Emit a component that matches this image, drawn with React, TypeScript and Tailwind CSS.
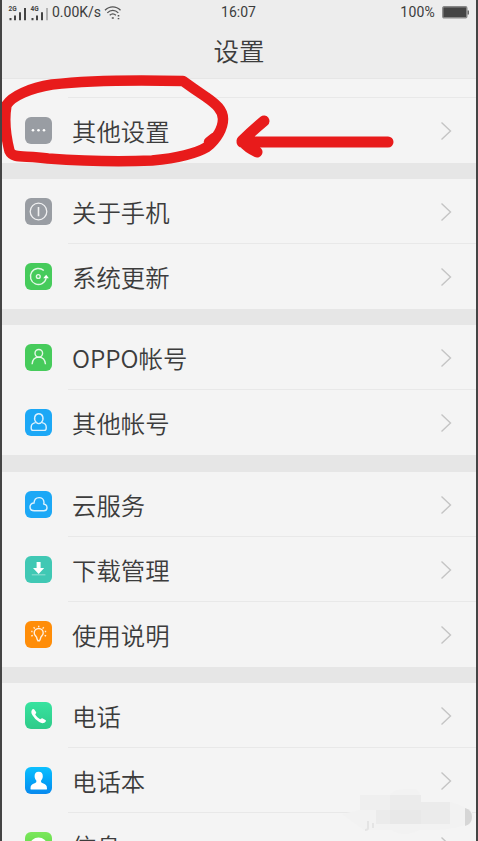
import React from "react";

type Item = { label: string; tile: string; icon: React.ReactNode };

const line = { fill: "none", stroke: "#fff", strokeOpacity: 0.85, strokeWidth: 1.1 };

const groups: { gap: string; items: Item[] }[] = [
  {
    gap: "mt-[19px]",
    items: [
      {
        label: "其他设置",
        tile: "bg-[#999da3]",
        icon: (
          <g fill="#fff">
            <circle cx="8" cy="13.300" r="1.3" />
            <circle cx="13.500" cy="13.300" r="1.3" />
            <circle cx="19" cy="13.300" r="1.3" />
          </g>
        ),
      },
    ],
  },
  {
    gap: "mt-4",
    items: [
      {
        label: "关于手机",
        tile: "bg-[#999da3]",
        icon: (
          <g {...line}>
            <circle cx="13.5" cy="13.5" r="8.3" strokeWidth="1.3" />
            <path d="M13.5 9v9.2" strokeWidth="1.6" />
          </g>
        ),
      },
      {
        label: "系统更新",
        tile: "bg-[#46cb5b]",
        icon: (
          <g {...line} strokeWidth="1.4">
            <path d="M18.800 7.600A8 8 0 1 0 21.200 15.200" />
            <path d="M18.200 15.200l3-3.400 2.600 3.400z" fill="#fff" stroke="none" />
            <circle cx="13.300" cy="13.500" r="1.900" />
          </g>
        ),
      },
    ],
  },
  {
    gap: "mt-4",
    items: [
      {
        label: "OPPO帐号",
        tile: "bg-[#46cb5b]",
        icon: (
          <g {...line} strokeWidth="1.4">
            <circle cx="13.800" cy="9.300" r="3.800" />
            <path d="M7.100 20.300c.2-4 2.500-7.200 6.700-7.200s6.400 3.200 6.700 7.200" />
          </g>
        ),
      },
      {
        label: "其他帐号",
        tile: "bg-[#1ca8f6]",
        icon: (
          <g {...line} strokeWidth="1.4">
            <path d="M11.300 13.600C8.300 10.400 9.400 4.800 13.800 4.800s5.500 5.600 2.500 8.800c-1.300 1.300-3.700 1.300-5 0z" />
            <path d="M10.500 13.600c-3 .6-4.300 1.800-4.300 4.400v1.200q0 2.200 2.200 2.200h10.600q2.200 0 2.200-2.200V18c0-2.600-1.200-3.800-4.200-4.400" />
          </g>
        ),
      },
    ],
  },
  {
    gap: "mt-[17px]",
    items: [
      {
        label: "云服务",
        tile: "bg-[#1ca8f6]",
        icon: (
          <path
            {...line}
            strokeWidth="1.400"
            d="M9.200 19.800C3.600 19.800 3.700 12 9 12 9.400 4.900 18.800 5 19 11.600c0 .8-.2 1.300-.6 1.900 1-.8 3.600.3 3.600 3 0 1.900-1.300 3.300-3.200 3.300z"
          />
        ),
      },
      {
        label: "下载管理",
        tile: "bg-[#40c8b4]",
        icon: (
          <g fill="#fff">
            <path d="M11.600 6h4v6.100h3.600l-5.600 5.800L8 12.100h3.600z" />
            <path d="M6.800 18.500h13.600v.8H6.800z" opacity=".6" />
          </g>
        ),
      },
      {
        label: "使用说明",
        tile: "bg-[#ff8d08]",
        icon: (
          <g {...line} strokeWidth="1.400">
            <path d="M11.900 17.500c0-2.200-2.700-2.800-2.700-5.500a4.500 4.500 0 0 1 9 0c0 2.700-2.700 3.300-2.700 5.500l-1 2.200h-1.600z" />
            <path d="M13.700 4.800v1.500M8.600 6.300l1.200 1.300M18.800 6.300l-1.200 1.300M6.200 10.500h1.400M21.200 10.500h-1.400M6.300 15l1.500-.7M21.100 15l-1.500-.7" />
          </g>
        ),
      },
    ],
  },
  {
    gap: "mt-4",
    items: [
      {
        label: "电话",
        tile: "bg-gradient-to-b from-[#38e3a0] to-[#2ecb89]",
        icon: (
          <path
            fill="#fff"
            d="M7.300 7.400c.7-.7 1.500-.6 2 0l1.700 2.500c.4.700.2 1.300-.4 1.800-.5.400-.3.900.1 1.500a16 16 0 0 0 3.700 3.600c.7.500 1.200.4 1.600-.1.500-.6 1.100-.7 1.700-.3l2.700 1.700c.6.400.7 1 .3 1.500-1.500 2-4 2-6.500.5a20 20 0 0 1-6.900-7.100c-1.200-2.200-1.400-4.200 0-5.600z"
          />
        ),
      },
      {
        label: "电话本",
        tile: "bg-gradient-to-b from-[#0dc0ff] to-[#0889ee]",
        icon: (
          <path
            fill="#fff"
            d="M13.700 4.700c3 0 4.200 2.100 4.100 4.600-.1 2-.8 3.300-1.700 4.300-.3 1.700.1 2.200 1.700 2.700 2.600.8 4.200 1.900 4.200 5.200 0 .9-.3 1.100-1.100 1.100H6.600c-.8 0-1.100-.2-1.100-1.100 0-3.300 1.500-4.400 4.100-5.200 1.600-.5 2-1 1.700-2.700-.9-1-1.600-2.300-1.700-4.300-.1-2.500 1.100-4.600 4.100-4.600z"
          />
        ),
      },
      {
        label: "信息",
        tile: "bg-gradient-to-b from-[#7ce85c] to-[#4ccf3a]",
        icon: <ellipse cx="13.500" cy="13" rx="8.500" ry="7.500" fill="#fff" />,
      },
    ],
  },
];

function StatusBar() {
  return (
    <div className="flex h-[25px] items-center pl-[6px] pr-[7px] font-[Roboto] text-[14px] font-normal text-[#3c3c3c]">
      <div className="flex flex-1 items-center">
        <svg width="42" height="18" viewBox="0 0 42 18" fill="#444">
          <text x="0.500" y="7.300" fontSize="6.500" fontWeight="700">2G</text>
          <path d="M1.500 14h2v2.200h-2zM6 11.500h2v4.700H6zM11 8.200h2v8h-2zM16 4h2v12.200h-2z" />
          <text x="22.500" y="7.300" fontSize="6.500" fontWeight="700">4G</text>
          <path d="M23.500 14h2v2.200h-2zM28 11.500h2v4.700h-2zM33 8.200h2v8h-2z" />
          <path d="M38 4h2v12.200h-2z" opacity=".35" />
        </svg>
        <span className="ml-[2px] w-[51px] whitespace-nowrap">0.00K/s</span>
        <svg className="ml-[1px]" width="18" height="15" viewBox="0 0 18 15" fill="none" stroke="#555" strokeWidth="1.300">
          <path d="M1 5.300C5.500.6 12 .6 16.500 5.300M3.300 7.900c3.200-3.300 7.800-3.300 11 0M5.700 10.300c1.900-1.800 4.300-1.800 6.200 0" />
          <path d="M7.800 13h2M14.500 10v1.500M14.500 13v1.300" strokeWidth="1.600" />
        </svg>
      </div>
      <span>16:07</span>
      <div className="flex flex-1 items-center justify-end">
        <span className="mr-[7px] tracking-[0.2px]">100%</span>
        <svg width="27" height="13" viewBox="0 0 27 13">
          <rect x=".8" y=".8" width="24" height="11" rx="1.200" fill="#444" stroke="#888" strokeWidth="1.400" />
          <path d="M25.500 4.500h1.500v4h-1.500z" fill="#666" />
        </svg>
      </div>
    </div>
  );
}

function Row({ item, last }: { item: Item; last: boolean }) {
  return (
    <div className="flex h-[65px] shrink-0 pl-[23px]">
      <div className="flex w-[43px] shrink-0 items-center">
        <svg className={`rounded-[6px] ${item.tile}`} width="27" height="27" viewBox="0 0 27 27">
          {item.icon}
        </svg>
      </div>
      <div className={`flex flex-1 items-center border-b pl-1 pr-[24px] ${last ? "border-transparent" : "border-[#e8e8e8]"}`}>
        <span className="flex-1 pt-[2px] text-[24.4px] leading-none">{item.label}</span>
        <svg className="mt-[2px]" width="12" height="20" viewBox="0 0 12 20" fill="none" stroke="#c4c4c4" strokeWidth="1.400">
          <path d="M1.500 1.500l9 8.500-9 8.500" />
        </svg>
      </div>
    </div>
  );
}

export default function App() {
  return (
    <div className="relative flex h-[841px] w-[478px] flex-col overflow-hidden border-x-2 border-[#444] bg-[#e6e6e6] font-['Noto_Sans_CJK_SC',sans-serif] font-[350] text-[#3c3c3c]">
      <header className="h-[79px] shrink-0 border-b border-[#e6e6e6] bg-[#ededed]">
        <StatusBar />
        <h1 className="pt-[12px] text-center text-[25.500px] leading-none">设置</h1>
      </header>

      {groups.map((g, i) => (
        <section key={g.items[0].label} className={i === 0 ? "shrink-0 bg-[#f4f4f4]" : `shrink-0 bg-[#f4f4f4] ${g.gap}`}>
          {i === 0 && <div className="ml-[66px] h-[19px] border-b border-[#e8e8e8]" />}
          {g.items.map((item, n) => (
            <Row key={item.label} item={item} last={n === g.items.length - 1} />
          ))}
        </section>
      ))}

      {/* smudge over the bottom right corner */}
      <svg className="absolute left-[338px] top-[785px]" width="136" height="50" viewBox="0 0 136 50">
        <path d="M2 29l18-4V10h30q3-6 15-6h10q6 2 6 13h30q24 8 24 16-8 10-38 12H80q-18 8-28 0H24z" fill="#f2f2f2" />
        <path d="M20 10h31v15H20z" fill="#efefef" />
        <path d="M50 10h31v7h29v22H36V25h14z" fill="#ebebeb" />
        <path d="M50 25h31v14H50z" fill="#e8e8e8" />
        <path d="M125 23q7 2 7 9t-7 9z" fill="#d6d6d6" />
        <path d="M28 36v7q0 2-3 2M33 38v5" stroke="#e4e4e4" strokeWidth="2" fill="none" />
      </svg>

      {/* hand-drawn marks */}
      <svg className="pointer-events-none absolute -left-[2px] top-0" width="478" height="180" viewBox="0 0 478 180" fill="none" stroke="#e81b1b" strokeLinecap="round" strokeLinejoin="round">
        <path strokeWidth="10.500" d="M183 81C143 80 92 80 52 84.500C30 88 12 96 6.500 105C4 119 6 137 9.500 151C13 159 24 155 48 158.500C82 161 120 162 152 160.500C178 158 197 153 207 147C217 139 223 128 223 119C223 110 216 104 206 97Q194 89 183 81M209 142l5-4" />
        <path strokeWidth="11" d="M388 142H242M264 121Q252 131 242 141Q248 148 257 152" />
      </svg>
    </div>
  );
}
